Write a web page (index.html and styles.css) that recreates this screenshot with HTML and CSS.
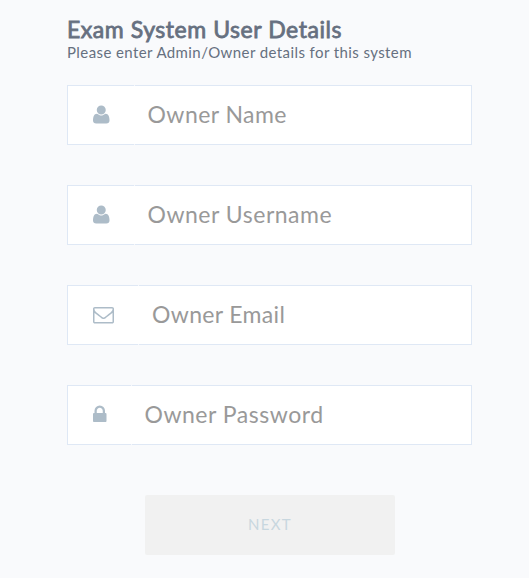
FILE: index.html
```
<!DOCTYPE html>
<html lang="en">
<head>
<meta charset="utf-8">
<title>Exam System User Details</title>
<link rel="stylesheet" href="styles.css">
</head>
<body>
<form class="setup">
  <h1 class="title">Exam System User Details</h1>
  <p class="subtitle">Please enter Admin/Owner details for this system</p>
  <label class="field">
    <span class="addon"><svg width="16.5" height="21" viewBox="0 -1536 1408 1792"><path transform="scale(1 -1)" d="M1408 131q0 -120 -73 -189.5t-194 -69.5h-874q-121 0 -194 69.5t-73 189.5q0 53 3.5 103.5t14 109t26.5 108.5t43 97.5t62 81t85.5 53.5t111.5 20q9 0 42 -21.5t74.5 -48t108 -48t133.5 -21.5t133.5 21.5t108 48t74.5 48t42 21.5q61 0 111.5 -20t85.5 -53.5t62 -81t43 -97.5t26.5 -108.5t14 -109t3.5 -103.5zM1088 1024q0 -159 -112.5 -271.5t-271.5 -112.5t-271.5 112.5t-112.5 271.5t112.5 271.5t271.5 112.5t271.5 -112.5t112.5 -271.5z"/></svg></span>
    <input class="input name" type="text" placeholder="Owner Name">
  </label>
  <label class="field">
    <span class="addon"><svg width="16.5" height="21" viewBox="0 -1536 1408 1792"><path transform="scale(1 -1)" d="M1408 131q0 -120 -73 -189.5t-194 -69.5h-874q-121 0 -194 69.5t-73 189.5q0 53 3.5 103.5t14 109t26.5 108.5t43 97.5t62 81t85.5 53.5t111.5 20q9 0 42 -21.5t74.5 -48t108 -48t133.5 -21.5t133.5 21.5t108 48t74.5 48t42 21.5q61 0 111.5 -20t85.5 -53.5t62 -81t43 -97.5t26.5 -108.5t14 -109t3.5 -103.5zM1088 1024q0 -159 -112.5 -271.5t-271.5 -112.5t-271.5 112.5t-112.5 271.5t112.5 271.5t271.5 112.5t271.5 -112.5t112.5 -271.5z"/></svg></span>
    <input class="input username" type="text" placeholder="Owner Username">
  </label>
  <label class="field">
    <span class="addon"><svg width="21" height="21" viewBox="0 -1536 1792 1792"><path transform="scale(1 -1)" d="M1664 32v768q-32 -36 -69 -66q-268 -206 -426 -338q-51 -43 -83 -67t-86.5 -48.5t-102.5 -24.5h-1h-1q-48 0 -102.5 24.5t-86.5 48.5t-83 67q-158 132 -426 338q-37 30 -69 66v-768q0 -13 9.5 -22.5t22.5 -9.5h1472q13 0 22.5 9.5t9.5 22.5zM1664 1083v11v13.5t-0.5 13t-3 12.5t-5.5 9t-9 7.5t-14 2.5h-1472q-13 0 -22.5 -9.5t-9.5 -22.5q0 -168 147 -284q193 -152 401 -317q6 -5 35 -29.5t46 -37.5t44.5 -31.5t50.5 -27.5t43 -9h1h1q20 0 43 9t50.5 27.5t44.5 31.5t46 37.5t35 29.5q208 165 401 317q54 43 100.5 115.5t46.5 131.5zM1792 1120v-1088q0 -66 -47 -113t-113 -47h-1472q-66 0 -113 47t-47 113v1088q0 66 47 113t113 47h1472q66 0 113 -47t47 -113z"/></svg></span>
    <input class="input email" type="email" placeholder="Owner Email">
  </label>
  <label class="field">
    <span class="addon"><svg width="13.5" height="21" viewBox="0 -1536 1152 1792"><path transform="scale(1 -1)" d="M320 768h512v192q0 106 -75 181t-181 75t-181 -75t-75 -181v-192zM1152 672v-576q0 -40 -28 -68t-68 -28h-960q-40 0 -68 28t-28 68v576q0 40 28 68t68 28h32v192q0 184 132 316t316 132t316 -132t132 -316v-192h32q40 0 68 -28t28 -68z"/></svg></span>
    <input class="input password" type="password" placeholder="Owner Password">
  </label>
  <button class="next" type="button" disabled>NEXT</button>
</form>
</body>
</html>
```
FILE: styles.css
```
* { box-sizing: border-box; }
body {
  margin: 0;
  height: 578px;
  background: #f9fafc;
  font-family: Lato, "Liberation Sans", sans-serif;
  color: #667080;
}
.setup {
  display: flex;
  flex-direction: column;
  width: 405px;
  margin-left: 67px;
  padding-top: 16px;
}
.title {
  margin: 0;
  font-size: 23px;
  line-height: 26px;
  font-weight: 400;
  -webkit-text-stroke: 0.8px #667080;
  letter-spacing: 0.55px;
  white-space: nowrap;
}
.subtitle {
  margin: 0 0 23px;
  font-size: 15px;
  line-height: 20px;
  letter-spacing: 0.41px;
  white-space: nowrap;
}
.field {
  display: flex;
  height: 60px;
  margin-bottom: 40px;
  background: #fff;
  border: 1px solid #dfe8f5;
}
.addon {
  position: relative;
  display: flex;
  align-items: center;
  flex: none;
  padding: 0 25px 1px;
}
/* Small break in the border where the icon cell meets the input. */
.addon::after {
  content: "";
  position: absolute;
  top: -1px;
  right: 0;
  width: 1px;
  height: 60px;
  background: #fff;
  opacity: 0.7;
}
.addon svg { display: block; fill: #adbcc8; }
.input {
  flex: 1;
  min-width: 0;
  border: 0;
  outline: 0;
  padding: 0 13px 2px;
  background: transparent;
  font: 400 23px Lato, "Liberation Sans", sans-serif;
  letter-spacing: 0.45px;
  color: #667080;
}
.username, .password { letter-spacing: 0.52px; }
.email { letter-spacing: 0.34px; }
.input::placeholder { color: #999; opacity: 1; }
.next {
  align-self: center;
  width: 250px;
  height: 60px;
  margin: 10px 0 0 1px;
  padding: 0 0 2px;
  border: 0;
  border-radius: 2px;
  background: #f1f1f1;
  font: 400 15px Lato, "Liberation Sans", sans-serif;
  letter-spacing: 1.3px;
  color: #c8d7df;
}
```
